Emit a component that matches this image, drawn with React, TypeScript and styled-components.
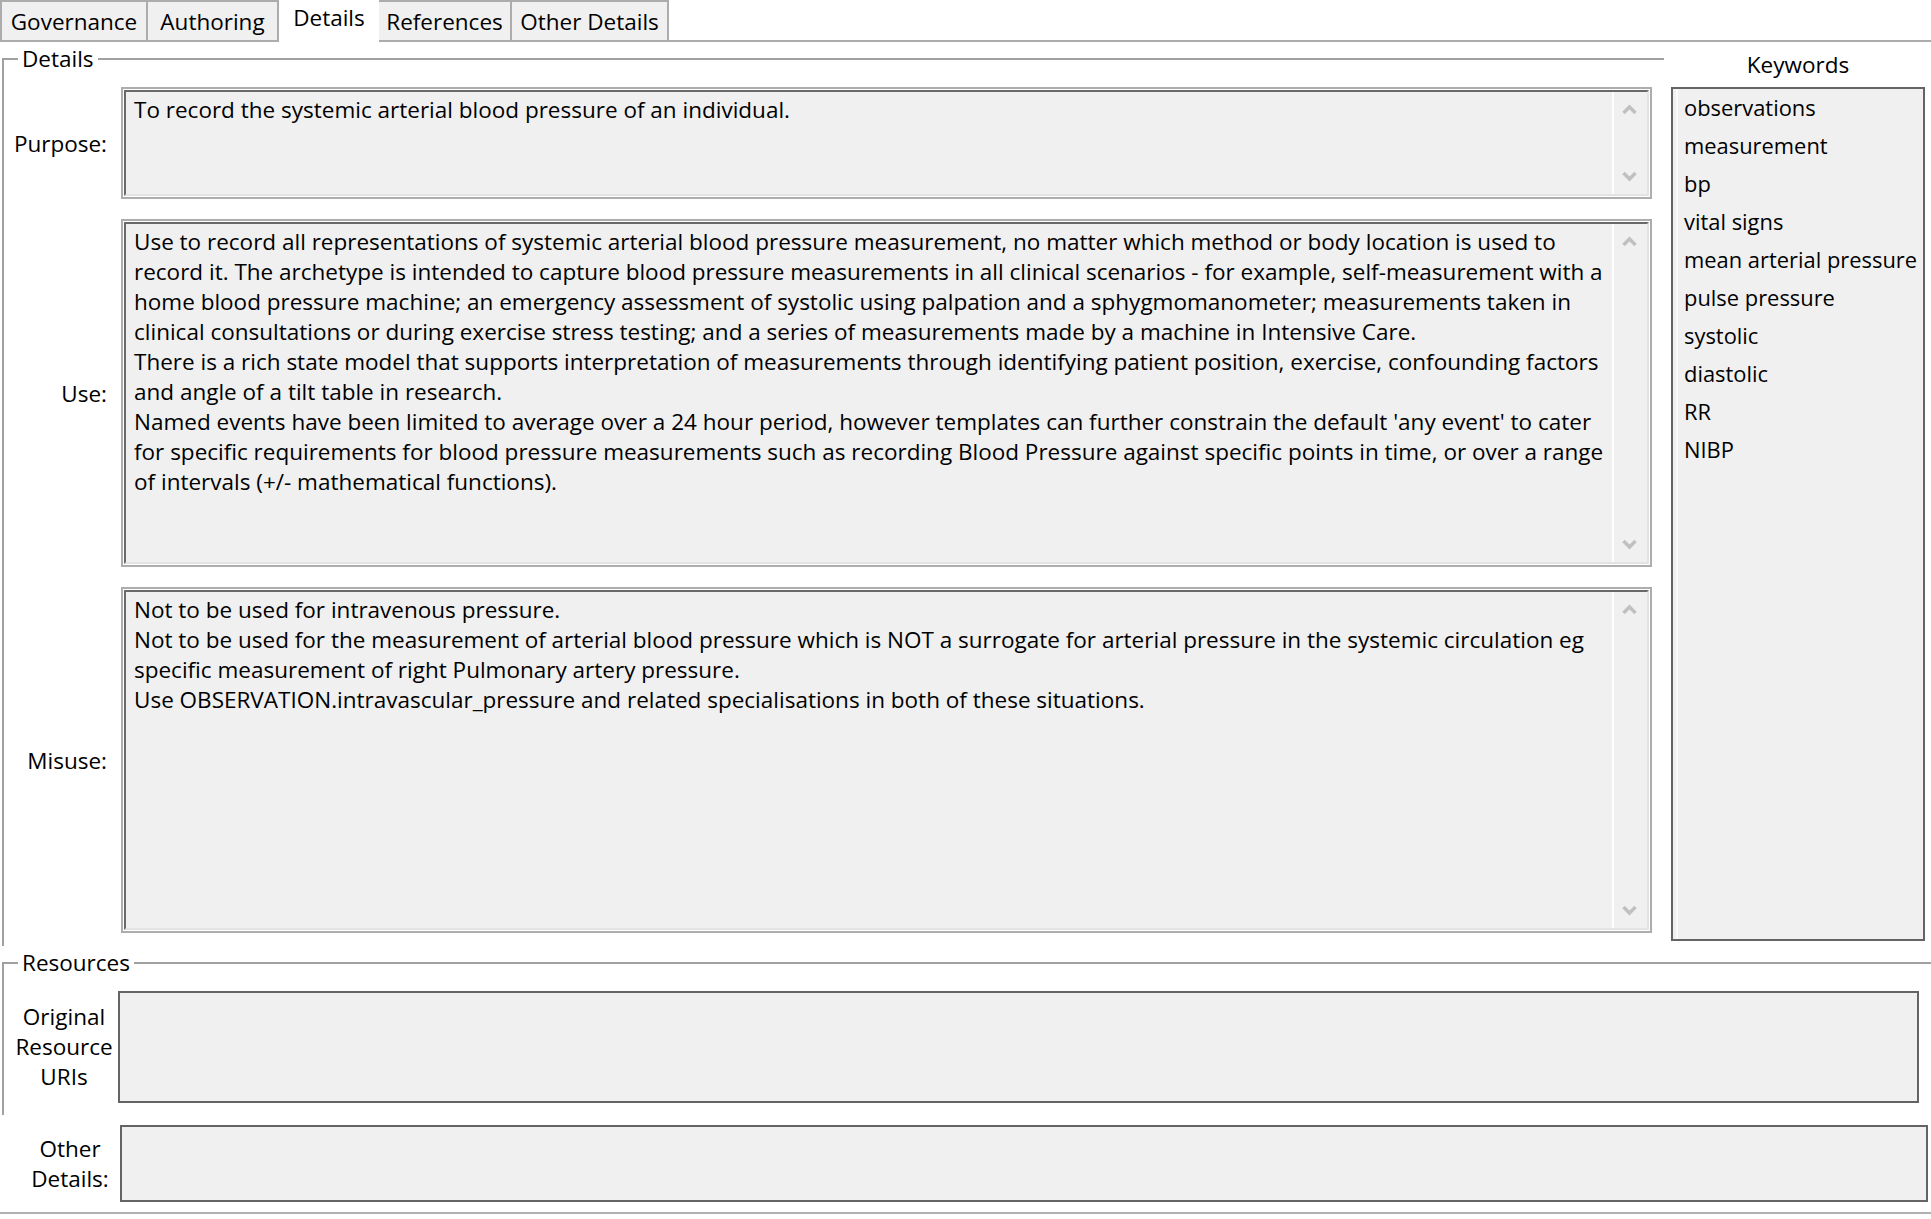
import React from 'react';
import styled, { createGlobalStyle } from 'styled-components';

const GlobalStyle = createGlobalStyle`
  html, body { margin: 0; padding: 0; background: #ffffff; }
  body {
    font-family: "Open Sans", "Noto Sans", "Liberation Sans", sans-serif;
    font-size: 22.5px;
    color: #000000;
  }
  * { box-sizing: border-box; }
`;

const Page = styled.div`
  width: 1931px;
  height: 1219px;
  overflow: hidden;
  display: flex;
  flex-direction: column;
  background: #ffffff;
`;

/* ---------- Tabs ---------- */
const TabBar = styled.div`
  display: flex;
  height: 42px;
  flex: none;
`;

const Tab = styled.div<{ $w: number; $active?: boolean }>`
  width: ${(p) => p.$w}px;
  height: 42px;
  flex: none;
  display: flex;
  align-items: center;
  justify-content: center;
  white-space: nowrap;
  margin-left: ${(p) => (p.$active ? 0 : -2)}px;
  background: ${(p) => (p.$active ? '#ffffff' : '#f0f0f0')};
  border: ${(p) => (p.$active ? 'none' : '2px solid #acacac')};
  padding-bottom: ${(p) => (p.$active ? 8 : 0)}px;
  position: ${(p) => (p.$active ? 'relative' : 'static')};
  z-index: ${(p) => (p.$active ? 1 : 0)};
  &:first-child { margin-left: 0; }
`;

const TabFiller = styled.div`
  flex: 1;
  margin-left: -2px;
  border-bottom: 2px solid #acacac;
`;

/* ---------- Group boxes ---------- */
const Group = styled.fieldset<{ $w: number; $padR: number; $padB: number }>`
  margin: 2px 0 0 2px;
  padding: 0 ${(p) => p.$padR}px ${(p) => p.$padB}px 0;
  width: ${(p) => p.$w}px;
  min-width: 0;
  border: none;
  border-top: 2px solid #a0a0a0;
  border-left: 2px solid #a0a0a0;
  flex: none;
`;

const Legend = styled.legend`
  margin-left: 14px;
  padding: 0 4px;
  line-height: 30px;
  height: 30px;
`;

const TopSection = styled.div`
  display: flex;
  align-items: flex-start;
  gap: 7px;
  flex: none;
`;

const FieldGrid = styled.div`
  margin-top: 13px;
  display: grid;
  grid-template-columns: 103px 1531px;
  column-gap: 14px;
  row-gap: 20px;
`;

const FieldLabel = styled.div`
  display: flex;
  align-items: center;
  justify-content: flex-end;
  text-align: right;
  white-space: nowrap;
`;

/* ---------- Sunken text box with scrollbar ---------- */
const TextBox = styled.div<{ $h: number }>`
  height: ${(p) => p.$h}px;
  border: 2px solid #adadad;
  background: #ffffff;
  padding: 1px;
  display: flex;
`;

const TextBoxInner = styled.div`
  flex: 1;
  display: flex;
  min-width: 0;
  background: #f0f0f0;
  border-top: 2px solid #696969;
  border-left: 2px solid #696969;
  border-right: 2px solid #e3e3e3;
  border-bottom: 2px solid #e3e3e3;
`;

const TextContent = styled.div`
  flex: 1;
  min-width: 0;
  padding: 3px 8px;
  line-height: 30px;
  white-space: nowrap;
  overflow: hidden;
`;

const Line = styled.div`
  height: 30px;
`;

const ScrollTrack = styled.div`
  width: 35px;
  flex: none;
  border-left: 2px solid #ffffff;
  display: flex;
  flex-direction: column;
  justify-content: space-between;
  align-items: center;
  padding: 12px 2px 12px 0;
`;

const Arrow = ({ down }: { down?: boolean }) => (
  <svg width="15" height="11" viewBox="0 0 15 11">
    <polyline
      points={down ? '1.5,2 7.5,8 13.5,2' : '1.5,9 7.5,3 13.5,9'}
      fill="none"
      stroke="#c0c0c0"
      strokeWidth="3.5"
      strokeLinejoin="miter"
    />
  </svg>
);

/* ---------- Keywords ---------- */
const KeywordsColumn = styled.div`
  width: 254px;
  flex: none;
  display: flex;
  flex-direction: column;
  padding-top: 8px;
`;

const KeywordsTitle = styled.div`
  text-align: center;
  line-height: 30px;
  height: 30px;
`;

const KeywordsBox = styled.div`
  margin-top: 7px;
  height: 854px;
  border: 2px solid #646464;
  background: #f0f0f0;
  box-shadow: inset 3px 0 0 #f0f0f0, inset 5px 0 0 #fafafa;
  padding-left: 11px;
  white-space: nowrap;
  overflow: hidden;
`;

const Keyword = styled.div`
  font-size: 21.9px;
  line-height: 38px;
  height: 38px;
`;

/* ---------- Resources / Other ---------- */
const ResourceRow = styled.div`
  margin-top: 13px;
  display: flex;
  align-items: center;
  padding-left: 10px;
  gap: 4px;
`;

const OtherRow = styled.div`
  margin-top: 10px;
  display: flex;
  align-items: center;
  padding-left: 20px;
  flex: none;
`;

const CenterLabel = styled.div`
  width: 100px;
  flex: none;
  text-align: center;
  line-height: 30px;
`;

const PlainBox = styled.div<{ $w: number; $h: number }>`
  width: ${(p) => p.$w}px;
  height: ${(p) => p.$h}px;
  flex: none;
  border: 2px solid #646464;
  background: #f0f0f0;
`;

const BottomRule = styled.div`
  margin-top: 10px;
  height: 2px;
  background: #b0b0b0;
  flex: none;
`;

const tabs = [
  { label: 'Governance', w: 148 },
  { label: 'Authoring', w: 133 },
  { label: 'Details', w: 100, active: true },
  { label: 'References', w: 135 },
  { label: 'Other Details', w: 159 },
];

const fields: { label: string; h: number; lines: string[] }[] = [
  {
    label: 'Purpose:',
    h: 112,
    lines: ['To record the systemic arterial blood pressure of an individual.'],
  },
  {
    label: 'Use:',
    h: 348,
    lines: [
      'Use to record all representations of systemic arterial blood pressure measurement, no matter which method or body location is used to',
      'record it. The archetype is intended to capture blood pressure measurements in all clinical scenarios - for example, self-measurement with a',
      'home blood pressure machine; an emergency assessment of systolic using palpation and a sphygmomanometer; measurements taken in',
      'clinical consultations or during exercise stress testing; and a series of measurements made by a machine in Intensive Care.',
      'There is a rich state model that supports interpretation of measurements through identifying patient position, exercise, confounding factors',
      'and angle of a tilt table in research.',
      "Named events have been limited to average over a 24 hour period, however templates can further constrain the default 'any event' to cater",
      'for specific requirements for blood pressure measurements such as recording Blood Pressure against specific points in time, or over a range',
      'of intervals (+/- mathematical functions).',
    ],
  },
  {
    label: 'Misuse:',
    h: 346,
    lines: [
      'Not to be used for intravenous pressure.',
      'Not to be used for the measurement of arterial blood pressure which is NOT a surrogate for arterial pressure in the systemic circulation eg',
      'specific measurement of right Pulmonary artery pressure.',
      'Use OBSERVATION.intravascular_pressure and related specialisations in both of these situations.',
    ],
  },
];

const keywords = [
  'observations',
  'measurement',
  'bp',
  'vital signs',
  'mean arterial pressure',
  'pulse pressure',
  'systolic',
  'diastolic',
  'RR',
  'NIBP',
];

export default function App() {
  return (
    <Page>
      <GlobalStyle />
      <TabBar>
        {tabs.map((t) => (
          <Tab key={t.label} $w={t.w} $active={t.active}>
            {t.label}
          </Tab>
        ))}
        <TabFiller />
      </TabBar>

      <TopSection>
        <Group $w={1662} $padR={12} $padB={13}>
          <Legend>Details</Legend>
          <FieldGrid>
            {fields.map((f) => (
              <React.Fragment key={f.label}>
                <FieldLabel>{f.label}</FieldLabel>
                <TextBox $h={f.h}>
                  <TextBoxInner>
                    <TextContent>
                      {f.lines.map((l, i) => (
                        <Line key={i}>{l}</Line>
                      ))}
                    </TextContent>
                    <ScrollTrack>
                      <Arrow />
                      <Arrow down />
                    </ScrollTrack>
                  </TextBoxInner>
                </TextBox>
              </React.Fragment>
            ))}
          </FieldGrid>
        </Group>

        <KeywordsColumn>
          <KeywordsTitle>Keywords</KeywordsTitle>
          <KeywordsBox>
            {keywords.map((k) => (
              <Keyword key={k}>{k}</Keyword>
            ))}
          </KeywordsBox>
        </KeywordsColumn>
      </TopSection>

      <Group $w={1929} $padR={12} $padB={12}>
        <Legend>Resources</Legend>
        <ResourceRow>
          <CenterLabel>
            Original
            <br />
            Resource
            <br />
            URIs
          </CenterLabel>
          <PlainBox $w={1801} $h={112} />
        </ResourceRow>
      </Group>

      <OtherRow>
        <CenterLabel>
          Other
          <br />
          Details:
        </CenterLabel>
        <PlainBox $w={1808} $h={77} />
      </OtherRow>

      <BottomRule />
    </Page>
  );
}
